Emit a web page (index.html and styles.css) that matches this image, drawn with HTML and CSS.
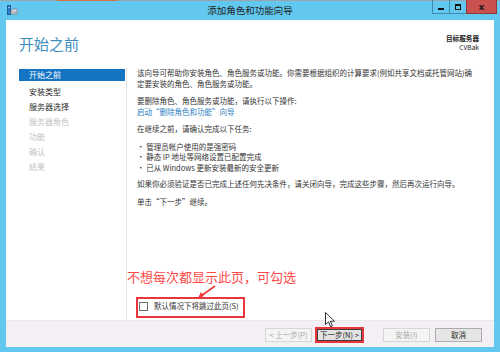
FILE: index.html
```
<html>
<head>
     <title>添加角色和功能向导</title>
     <link rel="stylesheet" href="styles.css">
</head>
<body>
     <div class="window">
          <div class="topstrip"><span class="seg"></span></div>
          <div class="titlebar">
               <div class="tb-left">
                    <svg class="app-icon" width="11" height="10" viewBox="0 0 11 10">
                         <rect x="0.5" y="0.5" width="3" height="9" fill="#2f7fc8" stroke="#1c5e9e" stroke-width="1"/>
                         <rect x="1.5" y="2" width="1" height="1" fill="#fff"/>
                         <path d="M4 6 L6 4 L10 4 L10 9 L4 9 Z" fill="#e8e8e8" stroke="#7a8a96" stroke-width="1"/>
                         <line x1="5" y1="7" x2="9" y2="7" stroke="#7a8a96" stroke-width="1"/>
                    </svg>
               </div>
               <div class="tb-title">添加角色和功能向导</div>
               <div class="tb-right">
                    <div class="ctl ctl-min"><span></span></div>
                    <div class="ctl ctl-max"><span></span></div>
                    <div class="ctl ctl-close">x</div>
               </div>
          </div>

          <div class="client">
               <div class="main">
                    <div class="header">
                         <h1>开始之前</h1>
                         <div class="target">
                              <div class="target-label">目标服务器</div>
                              <div>CVBak</div>
                         </div>
                    </div>

                    <div class="body">
                         <ul class="nav">
                              <li class="active">开始之前</li>
                              <li>安装类型</li>
                              <li>服务器选择</li>
                              <li class="off">服务器角色</li>
                              <li class="off">功能</li>
                              <li class="off">确认</li>
                              <li class="off">结果</li>
                         </ul>

                         <div class="content">
                              <p>该向导可帮助你安装角色、角色服务或功能。你需要根据组织的计算要求(例如共享文档或托管网站)确定要安装的角色、角色服务或功能。</p>
                              <p>要删除角色、角色服务或功能，请执行以下操作:<br><a class="link">启动“删除角色和功能”向导</a></p>
                              <p>在继续之前，请确认完成以下任务:</p>
                              <div class="tasks">
                                   <div class="task">• 管理员帐户使用的是强密码</div>
                                   <div class="task">• 静态 IP 地址等网络设置已配置完成</div>
                                   <div class="task">• 已从 Windows 更新安装最新的安全更新</div>
                              </div>
                              <p>如果你必须验证是否已完成上述任何先决条件，请关闭向导，完成这些步骤，然后再次运行向导。</p>
                              <p>单击“下一步”继续。</p>

                              <label class="skip">
                                   <span class="box"></span>
                                   <span>默认情况下将跳过此页(S)</span>
                              </label>
                         </div>
                    </div>
               </div>

               <div class="footer">
                    <div class="btn disabled">&lt; 上一步(P)</div>
                    <div class="btn next">下一步(N) &gt;</div>
                    <div class="btn disabled install">安装(I)</div>
                    <div class="btn cancel">取消</div>
               </div>
          </div>

          <!-- annotation on top of the screenshot -->
          <div class="note">不想每次都显示此页，可勾选</div>
          <svg class="note-arrow" width="22" height="17" viewBox="0 0 22 17">
               <line x1="19" y1="3" x2="5" y2="13" stroke="#f03a3a" stroke-width="1.6"/>
               <path d="M2 15 L5 9 L8 13 Z" fill="#f03a3a"/>
          </svg>

          <svg class="cursor" width="11" height="16" viewBox="0 0 11 16">
               <path d="M0.5 0.5 L0.5 12.5 L3.5 9.8 L5.6 14.8 L7.4 14 L5.4 9.2 L9.5 9.2 Z" fill="#fff" stroke="#333" stroke-width="1"/>
          </svg>
     </div>
</body>
</html>
```

FILE: styles.css
```
body {
     margin: 0;
     font-family: "Noto Sans CJK SC", "Noto Sans", sans-serif;
     color: #333;
}

.window {
     position: relative;
     width: 500px;
     height: 352px;
     background-color: #62c8ef;
     padding: 0 6px 5px 6px;
     box-sizing: border-box;
     overflow: hidden;
}

.topstrip {
     height: 1px;
     margin: 0 -6px;
     background-color: #9aa6ad;
}

.topstrip .seg {
     display: block;
     margin-left: 57px;
     width: 60px;
     height: 1px;
     background-color: #d2733a;
}

.titlebar {
     height: 19px;
     display: grid;
     grid-template-columns: 1fr auto 1fr;
     align-items: start;
}

.tb-left {
     padding: 4px 0 0 1px;
}

.app-icon {
     display: block;
}

.tb-title {
     font-size: 9.5px;
     line-height: 19px;
     color: #1e1e1e;
}

.tb-right {
     display: flex;
     justify-content: flex-end;
     margin-right: -3px;
     margin-top: -1px;
}

.ctl {
     height: 14px;
     box-sizing: border-box;
     display: flex;
     justify-content: center;
     align-items: center;
     border: 1px solid #3f8cb0;
     border-top: none;
}

.ctl-min,
.ctl-max {
     width: 17px;
     border-right: none;
}

.ctl-min span {
     display: block;
     width: 6px;
     height: 2px;
     background-color: #111;
     margin-top: 4px;
}

.ctl-max span {
     display: block;
     width: 4px;
     height: 3px;
     border: 1px solid #111;
     border-top-width: 2px;
}

.ctl-close {
     width: 31px;
     background-color: #c9514e;
     border-color: #8f3a38;
     font-size: 9px;
     font-weight: bold;
     color: #1a1a1a;
     line-height: 12px;
     font-family: "DejaVu Sans", sans-serif;
}

.client {
     background-color: #fff;
     height: 327px;
     display: flex;
     flex-direction: column;
}

.main {
     height: 300px;
     padding: 14px 15px 0 13px;
     box-sizing: border-box;
     display: flex;
     flex-direction: column;
}

.header {
     display: flex;
     justify-content: space-between;
     align-items: flex-start;
}

.header h1 {
     margin: 0;
     font-size: 15px;
     line-height: 20px;
     font-weight: normal;
     color: #3e8fbf;
}

.target {
     margin-top: 0;
     text-align: right;
     font-size: 6.6px;
     line-height: 9px;
     color: #222;
}

.target-label {
     font-weight: bold;
}

.body {
     flex: 1;
     margin-top: 14px;
     display: flex;
}

.nav {
     list-style: none;
     margin: 1px 0 0 0;
     padding: 0;
     width: 106px;
     font-size: 8px;
}

.nav li {
     height: 12px;
     line-height: 12px;
     padding-left: 10px;
     margin-bottom: 3px;
     color: #2a2a2a;
}

.nav li.active {
     background-color: #1474c4;
     color: #fff;
     margin-bottom: 5px;
}

.nav li.off {
     color: #c2c2c2;
}

.content {
     flex: 1;
     margin-left: 1px;
     border-left: 1px solid #e4e4e4;
     padding: 0 0 2px 10px;
     display: flex;
     flex-direction: column;
     font-size: 7.5px;
     line-height: 10.5px;
}

.content p {
     margin: 0 0 7px 0;
}

.link {
     color: #2a7fc4;
}

.tasks {
     margin: 0 0 6px 0;
}

.task {
     height: 10.5px;
}

.skip {
     margin-top: auto;
     margin-left: -1px;
     align-self: flex-start;
     height: 21px;
     box-sizing: border-box;
     border: 2px solid #e8373c;
     display: flex;
     align-items: center;
     padding: 0 4px 2px 1px;
     font-size: 7.5px;
     white-space: nowrap;
     color: #333;
}

.skip .box {
     width: 9px;
     height: 9px;
     box-sizing: border-box;
     border: 1px solid #707070;
     background-color: #fff;
     margin-right: 6px;
}

.footer {
     height: 27px;
     box-sizing: border-box;
     background-color: #f3eff4;
     border-top: 1px solid #ece7ee;
     display: flex;
     justify-content: flex-end;
     align-items: flex-start;
     padding: 7px 12px 0 0;
}

.btn {
     width: 47px;
     height: 14px;
     box-sizing: border-box;
     border: 1px solid #acacac;
     background-color: #e6e6e6;
     font-size: 7.5px;
     line-height: 12px;
     text-align: center;
     color: #222;
     margin-left: 3px;
}

.btn.disabled {
     background-color: #f4f4f4;
     border-color: #d6d6d6;
     color: #a8a8a8;
}

.btn.next {
     width: 49px;
     height: 16px;
     margin-top: -1px;
     border: 2px solid #e8373c;
     box-shadow: inset 0 0 0 1px #3c3c3c;
     background-color: #e3e3e3;
     line-height: 12px;
}

.btn.install {
     margin-left: 19px;
}

.btn.cancel {
     margin-left: 5px;
}

.note {
     position: absolute;
     left: 127px;
     top: 268px;
     font-size: 13px;
     line-height: 18px;
     color: #ff4a4a;
}

.note-arrow {
     position: absolute;
     left: 196px;
     top: 283px;
}

.cursor {
     position: absolute;
     left: 325px;
     top: 312px;
}
```
